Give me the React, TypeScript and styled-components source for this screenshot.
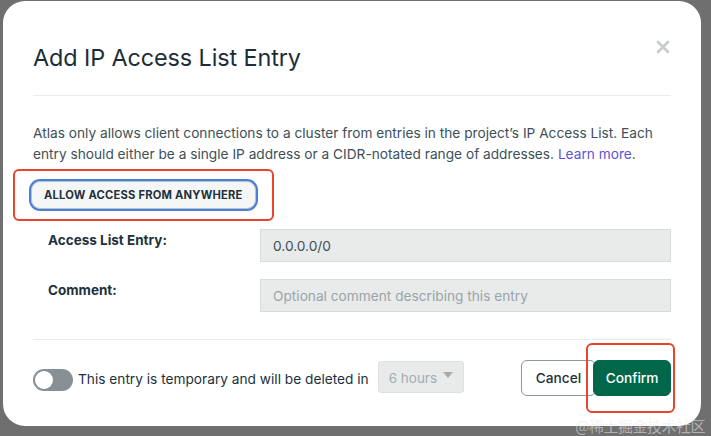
import styled, { createGlobalStyle } from 'styled-components';

const GlobalStyle = createGlobalStyle`
	html, body {
		margin: 0;
		padding: 0;
		background: #6f6f6f;
		font-family: Inter, 'Noto Sans', sans-serif;
	}
	* {
		box-sizing: border-box;
	}
`;

const Backdrop = styled.div`
	width: 711px;
	height: 436px;
	padding: 1px 10px 10px 3px;
	background: #6f6f6f;
	position: relative;
	overflow: hidden;
`;

const Modal = styled.div`
	width: 698px;
	height: 425px;
	background: #fff;
	border-radius: 22px;
	padding: 0 30px 0 30px;
	display: flex;
	flex-direction: column;
	position: relative;
	color: #21313c;
`;

const Header = styled.div`
	display: flex;
	justify-content: space-between;
	align-items: flex-start;
	height: 95px;
	padding-top: 42px;
	border-bottom: 1px solid #e7eeec;
`;

const Title = styled.h1`
	margin: 0;
	font-size: 23.4px;
	font-weight: 400;
	color: #1c2d38;
	letter-spacing: -0.1px;
`;

const CloseButton = styled.button`
	border: 0;
	background: none;
	padding: 0;
	margin: -3px 1px 0 0;
	width: 14px;
	height: 14px;
	cursor: pointer;
`;

const Body = styled.div`
	padding-top: 27px;
	height: 244px;
	border-bottom: 1px solid #e7eeec;
`;

const Description = styled.p`
	margin: 0;
	font-size: 13.7px;
	line-height: 21px;
	color: #3d4f58;
	white-space: nowrap;
`;

const Link = styled.a`
	color: #5b55d6;
	text-decoration: none;
`;

const Highlight = styled.div<{ $pad: string }>`
	display: flex;
	border: 2px solid #e8432b;
	border-radius: 6px;
	padding: ${({ $pad }) => $pad};
`;

const AnywhereWrap = styled.div`
	display: flex;
	margin: 4px 0 0 -20px;
`;

const AnywhereButton = styled.button`
	height: 28px;
	padding: 0 12px;
	border-radius: 9px;
	border: 1px solid #b8c4c2;
	box-shadow: 0 0 0 2px #4a80d9;
	background: #f5f7f7;
	color: #21313c;
	font-family: inherit;
	font-size: 11.2px;
	font-weight: 700;
	letter-spacing: 0.2px;
	text-transform: uppercase;
`;

const FieldGrid = styled.div`
	display: grid;
	grid-template-columns: 212px 1fr;
	row-gap: 17px;
	margin: 8px 0 0 15px;
	align-items: start;
`;

const FieldLabel = styled.label`
	font-size: 13.5px;
	font-weight: 700;
	color: #21313c;
	padding-top: 3px;
`;

const TextInput = styled.input`
	width: 411px;
	height: 33px;
	border: 1px solid #d6dcdb;
	background: #e8ebea;
	padding: 0 12px;
	font-family: inherit;
	font-size: 13.7px;
	color: #3d4f58;
	outline: none;
	&::placeholder {
		color: #9aa4a8;
	}
`;

const Footer = styled.div`
	display: flex;
	align-items: center;
	justify-content: space-between;
	padding-top: 3px;
`;

const TempRow = styled.div`
	display: flex;
	align-items: center;
	gap: 5px;
	font-size: 13.7px;
	color: #21313c;
	margin-top: 2px;
`;

const Toggle = styled.div`
	width: 40px;
	height: 22px;
	border-radius: 11px;
	background: #889096;
	padding: 2px;
	display: flex;
	align-items: center;
	margin-top: 2px;
`;

const Knob = styled.div`
	width: 18px;
	height: 18px;
	border-radius: 50%;
	background: #fff;
`;

const SelectBox = styled.div`
	width: 86px;
	height: 32px;
	margin-left: 4px;
	margin-top: -4px;
	border: 1px solid #dde2e1;
	border-radius: 3px;
	background: #e8ebea;
	color: #a3acb0;
	font-size: 13.5px;
	display: flex;
	align-items: center;
	justify-content: space-between;
	padding: 2px 10px 0 10px;
`;

const Caret = styled.span`
	align-self: flex-start;
	margin-top: 8px;
	width: 0;
	height: 0;
	border-left: 5px solid transparent;
	border-right: 5px solid transparent;
	border-top: 6px solid #a3acb0;
`;

const Actions = styled.div`
	display: flex;
	align-items: center;
	margin-right: -4px;
`;

const ConfirmWrap = styled.div`
	display: flex;
	margin-left: -10px;
`;

const ActionButton = styled.button<{ $primary?: boolean }>`
	height: 36px;
	padding: 0 ${({ $primary }) => ($primary ? '11.5px' : '14px')};
	border-radius: 6px;
	font-family: inherit;
	font-size: 13.7px;
	font-weight: 500;
	border: 1px solid ${({ $primary }) => ($primary ? '#00674a' : '#8d969a')};
	background: ${({ $primary }) => ($primary ? '#00674a' : '#fff')};
	color: ${({ $primary }) => ($primary ? '#fff' : '#21313c')};
	cursor: pointer;
`;

const Watermark = styled.div`
	position: absolute;
	right: 6px;
	bottom: 0px;
	font-size: 15px;
	color: rgba(235, 235, 235, 0.55);
	font-family: 'Noto Sans CJK SC', sans-serif;
	letter-spacing: -0.5px;
`;

const CloseIcon = () => (
	<svg width='14' height='14' viewBox='0 0 14 14'>
		<path d='M2 2 L12 12 M12 2 L2 12' stroke='#c8cccc' strokeWidth='2.6' strokeLinecap='round' />
	</svg>
);

export default function App() {
	return (
		<>
			<GlobalStyle />
			<Backdrop>
				<Modal>
					<Header>
						<Title>Add IP Access List Entry</Title>
						<CloseButton aria-label='Close'>
							<CloseIcon />
						</CloseButton>
					</Header>
					<Body>
						<Description>
							Atlas only allows client connections to a cluster from entries in the project’s IP Access List. Each
							<br />
							entry should either be a single IP address or a CIDR-notated range of addresses.{' '}
							<Link href='#'>Learn more</Link>.
						</Description>
						<AnywhereWrap>
							<Highlight $pad='10px 16px 10px 16px'>
								<AnywhereButton>Allow access from anywhere</AnywhereButton>
							</Highlight>
						</AnywhereWrap>
						<FieldGrid>
							<FieldLabel>Access List Entry:</FieldLabel>
							<TextInput defaultValue='0.0.0.0/0' />
							<FieldLabel>Comment:</FieldLabel>
							<TextInput placeholder='Optional comment describing this entry' />
						</FieldGrid>
					</Body>
					<Footer>
						<TempRow>
							<Toggle>
								<Knob />
							</Toggle>
							This entry is temporary and will be deleted in
							<SelectBox>
								6 hours
								<Caret />
							</SelectBox>
						</TempRow>
						<Actions>
							<ActionButton>Cancel</ActionButton>
							<ConfirmWrap>
								<Highlight $pad='15px 2px 15px 5px'>
									<ActionButton $primary>Confirm</ActionButton>
								</Highlight>
							</ConfirmWrap>
						</Actions>
					</Footer>
				</Modal>
				<Watermark>@稀土掘金技术社区</Watermark>
			</Backdrop>
		</>
	);
}
